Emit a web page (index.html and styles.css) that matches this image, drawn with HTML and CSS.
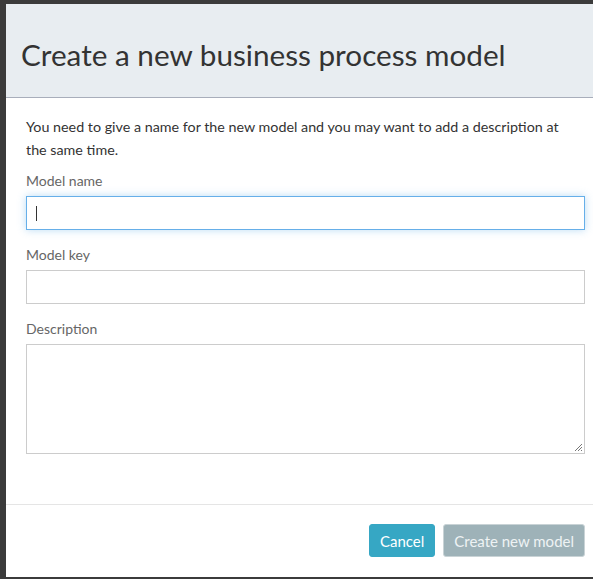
FILE: index.html
```html
<!DOCTYPE html>
<html>
<head>
<meta charset="utf-8">
<link rel="stylesheet" href="styles.css">
</head>
<body>
<div class="modal">
  <div class="modal-header">
    <h2 class="title">Create a new business process model</h2>
  </div>
  <div class="modal-body">
    <p class="intro">You need to give a name for the new model and you may want to add a description at the same time.</p>
    <div class="group">
      <label class="label">Model name</label>
      <div class="input focused"><span class="caret"></span></div>
    </div>
    <div class="group">
      <label class="label">Model key</label>
      <div class="input"></div>
    </div>
    <div class="group">
      <label class="label">Description</label>
      <div class="input textarea">
        <svg class="grip" width="9" height="9" viewBox="0 0 9 9"><path d="M1 8 L8 1 M4 8 L8 4 M7 8 L8 7" stroke="#777" stroke-width="1"/></svg>
      </div>
    </div>
  </div>
  <div class="modal-footer">
    <button class="btn btn-cancel">Cancel</button>
    <button class="btn btn-create">Create new model</button>
  </div>
</div>
</body>
</html>
```

FILE: styles.css
```css
html, body {
  margin: 0;
  padding: 0;
  height: 579px;
  overflow: hidden;
}
body {
  background: #3b3b3b;
  font-family: Lato, "Open Sans", sans-serif;
  color: #333;
  padding: 4px 0 0 6px;
  box-sizing: border-box;
}
.modal {
  width: 599px;
  background: #fff;
}
.modal-header {
  background: #e8edf1;
  border-bottom: 1px solid #a8aebb;
  height: 94px;
  box-sizing: border-box;
  padding: 0 15px;
  display: flex;
  align-items: center;
}
.title {
  margin: 0;
  font-weight: 400;
  font-size: 29.7px;
  color: #333;
  padding-top: 8px;
}
.modal-body {
  padding: 17px 20px 0 20px;
  height: 406px;
  box-sizing: border-box;
}
.intro {
  margin: 0 0 10px 0;
  padding-right: 12px;
  font-size: 14.3px;
  line-height: 23px;
}
.group {
  display: flex;
  flex-direction: column;
  margin-bottom: 15px;
}
.label {
  font-size: 14px;
  color: #666;
  line-height: 20px;
  margin-bottom: 5px;
}
.input {
  height: 34px;
  box-sizing: border-box;
  border: 1px solid #ccc;
  position: relative;
}
.input.focused {
  border-color: #66afe9;
  box-shadow: 0 0 8px rgba(102, 175, 233, 0.45);
  display: flex;
  align-items: center;
  padding-left: 9px;
}
.caret {
  width: 1px;
  height: 15px;
  background: #333;
}
.textarea {
  height: 110px;
}
.grip {
  position: absolute;
  right: 1px;
  bottom: 1px;
}
.modal-footer {
  border-top: 1px solid #e5e5e5;
  padding: 19px 20px 20px 20px;
  display: flex;
  justify-content: flex-end;
  gap: 8px;
}
.btn {
  font-family: Lato, "Open Sans", sans-serif;
  font-size: 15px;
  height: 33px;
  padding: 0 10px;
  border-radius: 3px;
  color: #fff;
  border: 1px solid transparent;
}
.btn-cancel {
  background: #36a7c4;
  border-color: #36a7c4;
}
.btn-create {
  background: #9eb2b8;
  border-color: #c9d3d6;
  color: #eef3f4;
}
```
